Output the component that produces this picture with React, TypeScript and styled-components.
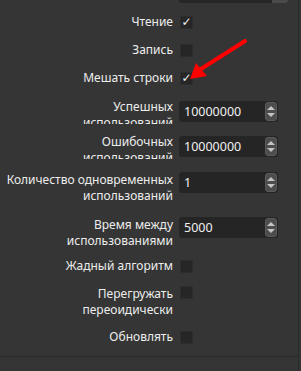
import { ReactElement } from 'react';
import styled, { createGlobalStyle } from 'styled-components';

const GlobalStyle = createGlobalStyle`
  html, body {
    margin: 0;
    padding: 0;
    background: #353535;
  }
  body {
    font-family: 'Noto Sans', 'Liberation Sans', sans-serif;
    font-size: 12px;
    color: #ededed;
  }
`;

const Panel = styled.div`
  position: relative;
  width: 298px;
  height: 371px;
  border-right: 1px solid #2a2a2a;
  background: #353535;
  overflow: hidden;
`;

const TopWidget = styled.div`
  margin-left: 179px;
  width: 109px;
  height: 3px;
  display: flex;
  justify-content: flex-end;
  background: #262626;
  border-radius: 0 0 3px 3px;
  > div {
    width: 16px;
    background: #4b4b4b;
    border-radius: 0 0 3px 0;
  }
`;

const Form = styled.div`
  display: flex;
  flex-direction: column;
`;

const Row = styled.div<{ $mt: number; $h: number; $top?: boolean }>`
  display: flex;
  align-items: ${({ $top }) => ($top ? 'flex-start' : 'center')};
  margin-top: ${({ $mt }) => $mt}px;
  height: ${({ $h }) => $h}px;
`;

const Label = styled.div<{ $clip?: boolean }>`
  width: 179px;
  flex: none;
  padding-right: 6px;
  box-sizing: border-box;
  text-align: right;
  line-height: 16px;
  white-space: nowrap;
  ${({ $clip }) => ($clip ? 'height: 25px; overflow: hidden;' : '')}
`;

const Check = styled.div`
  width: 13px;
  height: 13px;
  margin-left: 1px;
  background: #262626;
  border: 1px solid #2d2d2d;
  box-sizing: border-box;
  display: flex;
  align-items: center;
  justify-content: center;
  color: #f4f4f4;
  font-family: 'DejaVu Sans', sans-serif;
  font-size: 12px;
  font-weight: bold;
  line-height: 1;
`;

const Spin = styled.div`
  width: 99px;
  height: 21px;
  display: flex;
  align-items: center;
  background: #252525;
  border-radius: 3px;
  box-sizing: border-box;
  padding-left: 5px;
  font-size: 12.5px;
  color: #f0f0f0;
  span {
    flex: 1;
  }
`;

const SpinButtons = styled.div`
  width: 12px;
  height: 19px;
  margin-right: 1px;
  background: #4d4d4d;
  border: 1px solid #5a5a5a;
  border-radius: 3px;
  box-sizing: border-box;
  display: flex;
  flex-direction: column;
  align-items: center;
  justify-content: center;
  gap: 3px;
`;

const Tri = styled.div<{ $down?: boolean }>`
  width: 0;
  height: 0;
  border-left: 4px solid transparent;
  border-right: 4px solid transparent;
  ${({ $down }) =>
    $down ? 'border-top: 4px solid #c4c4c4;' : 'border-bottom: 4px solid #c4c4c4;'}
`;

const BottomLine = styled.div`
  margin-top: 11px;
  height: 1px;
  background: #292929;
`;

const Arrow = styled.svg`
  position: absolute;
  left: 0;
  top: 0;
  pointer-events: none;
`;

type Item = {
  label: ReactElement | string;
  kind: 'check' | 'spin';
  value?: string;
  checked?: boolean;
  mt: number;
  h: number;
  top?: boolean;
  clip?: boolean;
};

const items: Item[] = [
  { label: 'Чтение', kind: 'check', checked: true, mt: 11, h: 16 },
  { label: 'Запись', kind: 'check', mt: 12, h: 16 },
  { label: 'Мешать строки', kind: 'check', checked: true, mt: 12, h: 16 },
  {
    label: (<>Успешных<br />использований</>),
    kind: 'spin',
    value: '10000000',
    mt: 13,
    h: 25,
    clip: true,
  },
  {
    label: (<>Ошибочных<br />использований</>),
    kind: 'spin',
    value: '10000000',
    mt: 10,
    h: 25,
    clip: true,
  },
  {
    label: (<>Количество одновременных<br />использований</>),
    kind: 'spin',
    value: '1',
    mt: 13,
    h: 33,
    top: true,
  },
  {
    label: (<>Время между<br />использованиями</>),
    kind: 'spin',
    value: '5000',
    mt: 12,
    h: 32,
    top: true,
  },
  { label: 'Жадный алгоритм', kind: 'check', mt: 9, h: 16 },
  {
    label: (<>Перегружать<br />переоидически</>),
    kind: 'check',
    mt: 12,
    h: 33,
    top: true,
  },
  { label: 'Обновлять', kind: 'check', mt: 10, h: 16 },
];

export default function App(): ReactElement {
  return (
    <>
      <GlobalStyle />
      <Panel>
        <TopWidget>
          <div />
        </TopWidget>
        <Form>
          {items.map((it, i) => (
            <Row key={i} $mt={it.mt} $h={it.h} $top={it.top}>
              <Label $clip={it.clip}>{it.label}</Label>
              {it.kind === 'check' ? (
                <Check>{it.checked ? '✓' : ''}</Check>
              ) : (
                <Spin>
                  <span>{it.value}</span>
                  <SpinButtons>
                    <Tri />
                    <Tri $down />
                  </SpinButtons>
                </Spin>
              )}
            </Row>
          ))}
        </Form>
        <BottomLine />
        <Arrow width="301" height="371" viewBox="0 0 301 371">
          <line x1="245" y1="41" x2="201" y2="69" stroke="#f00" strokeWidth="4" strokeLinecap="round" />
          <polygon points="190,79 196,63 207,76" fill="#f00" />
        </Arrow>
      </Panel>
    </>
  );
}
